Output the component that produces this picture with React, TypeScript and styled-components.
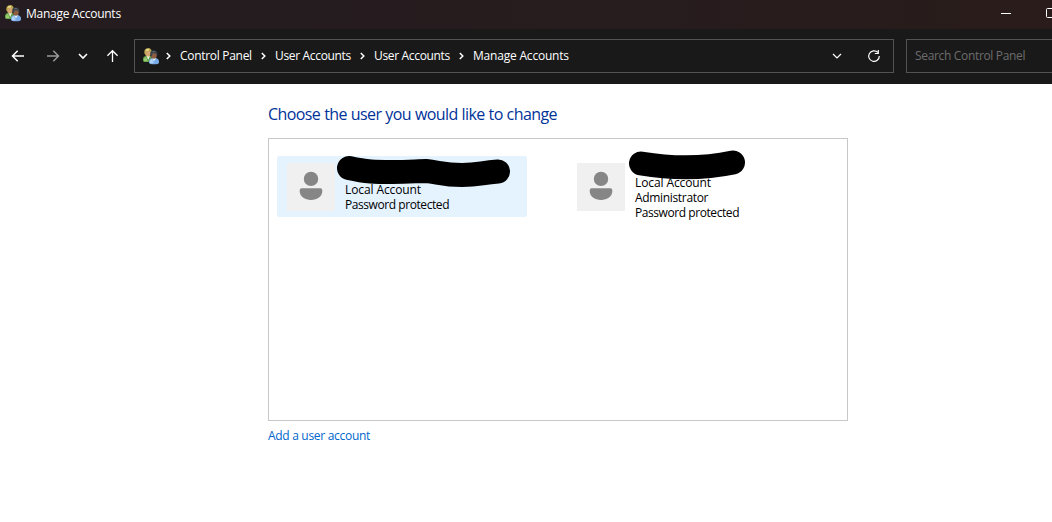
import React from "react";
import styled, { createGlobalStyle } from "styled-components";

const GlobalStyle = createGlobalStyle`
  * { box-sizing: border-box; }
  html, body { margin: 0; background: #fff; overflow: hidden; }
  body { font: 12px/15px "Segoe UI", "Open Sans", "Noto Sans", sans-serif; color: #000; }
`;

const Window = styled.div`
  width: 1052px;
  height: 522px;
  overflow: hidden;
  background: #fff;
`;

const TitleBar = styled.header`
  display: flex;
  align-items: center;
  height: 29px;
  padding: 0 0 2px 5px;
  background: linear-gradient(90deg, #241c20, #271c1e 60%, #291c1a);
  color: #fff;
`;

const Title = styled.span`
  margin-left: 5px;
  white-space: nowrap;
  letter-spacing: -0.27px;
`;

const WindowButtons = styled.div`
  display: flex;
  align-items: center;
  flex: none;
  gap: 34px;
  height: 28px;
  margin-left: auto;
  padding-top: 1px;
`;

const Toolbar = styled.nav`
  display: flex;
  align-items: center;
  height: 55px;
  padding-bottom: 1px;
  background: #191919;
  color: #fff;
`;

const NavButtons = styled.div`
  display: flex;
  align-items: center;
  flex: none;
  width: 134px;
  padding-left: 10px;
`;

const NavButton = styled.span<{ $width: number; $color?: string }>`
  display: flex;
  flex: none;
  width: ${(p) => p.$width}px;
  color: ${(p) => p.$color ?? "#fff"};
`;

const AddressBar = styled.div`
  display: flex;
  align-items: center;
  flex: none;
  width: 760px;
  height: 34px;
  padding: 0 12px 0 8px;
  border: 1px solid #535353;
`;

const Crumb = styled.span<{ $width: number; $spacing: number }>`
  flex: none;
  width: ${(p) => p.$width}px;
  padding-bottom: 1px;
  white-space: nowrap;
  letter-spacing: ${(p) => p.$spacing}px;
`;

const Separator = styled.span<{ $first: boolean }>`
  display: flex;
  flex: none;
  width: ${(p) => (p.$first ? 21 : 23)}px;
  padding-left: ${(p) => (p.$first ? 7 : 9)}px;
`;

const AddressActions = styled.div`
  display: flex;
  align-items: center;
  gap: 25px;
  margin-left: auto;
`;

const SearchBox = styled.div`
  flex: none;
  width: 160px;
  height: 34px;
  margin-left: 12px;
  padding: 8px;
  border: 1px solid #535353;
  color: #6d6d6d;
  white-space: nowrap;
  letter-spacing: -0.33px;
`;

const Content = styled.main`
  width: 580px;
  margin-left: 268px;
  padding-top: 20px;
`;

const Heading = styled.h1`
  margin: 0 0 13px;
  font-size: 16px;
  font-weight: 400;
  line-height: 21px;
  letter-spacing: -0.58px;
  word-spacing: 0.3px;
  color: #003399;
  white-space: nowrap;
`;

const AccountList = styled.section`
  display: flex;
  align-items: flex-start;
  gap: 40px;
  height: 283px;
  padding: 17px 8px;
  border: 1px solid #c8c8c8;
`;

const Account = styled.article<{ $selected?: boolean }>`
  display: flex;
  align-items: center;
  gap: 10px;
  width: 250px;
  min-height: 61px;
  padding-left: 10px;
  border-radius: 2px;
  background: ${(p) => (p.$selected ? "#e5f3ff" : "transparent")};
`;

const Avatar = styled.div`
  flex: none;
  width: 48px;
  height: 48px;
  background: #f0f0f0;
`;

const Details = styled.div`
  position: relative;
  padding-top: 3px;
  margin-bottom: -3px;
`;

const Name = styled.div`
  height: 15px;
`;

const Detail = styled.div<{ $spacing: number }>`
  white-space: nowrap;
  letter-spacing: ${(p) => p.$spacing}px;
`;

const Redaction = styled.svg<{ $left: number; $top: number }>`
  position: absolute;
  left: ${(p) => p.$left}px;
  top: ${(p) => p.$top}px;
`;

const AddLink = styled.a`
  display: block;
  margin-top: 7px;
  color: #0066cc;
  letter-spacing: -0.3px;
`;

const UsersIcon = () => (
  <svg width="16" height="17" viewBox="0 0 16 17">
    <path d="M0 12.500V10.500Q.3 8.300 2.600 7.900L7 7.500l2 2.500v4H1.500Q0 13.700 0 12.500Z" fill="#5f9f48" />
    <path d="M.8 11.500q.4-2.200 2.400-2.600l1.300 4.400H1.200Z" fill="#9acb72" />
    <path d="m3.400 7.800 1.800 4.200L7 7.800Z" fill="#eef1df" />
    <ellipse cx="4.900" cy="4.700" rx="3" ry="3.700" fill="#d3a56f" />
    <path d="M1.400 5.500Q.7 1.700 3.300.5 6.200-.6 7.900 1.300q1.200 1.500.5 4.200L7 3.300 3.500 3l-.9 3.500Z" fill="#b9a54c" />
    <path d="M2.300 2.400Q3.700.5 6.200 1.200L5.500 2.800Z" fill="#efe2a0" />
    <path d="M6 14.700v-1.700q.4-2.200 2.800-2.800l4.300-.2q2.700.8 2.900 3v1.700Q15.500 16.200 11 16.200q-4.500 0-5-1.500Z" fill="#78abe8" />
    <path d="M6.900 13q.5-1.700 2.200-1.900l1.700 4.100H6.800Z" fill="#b2d4fa" />
    <path d="m9.100 10 1.900 3.300 1.900-3.300Z" fill="#eef6ff" />
    <ellipse cx="10.900" cy="7.100" rx="3" ry="3.600" fill="#8b5d43" />
    <path d="M7.500 7.200Q6.700 3.600 9 2.700q2.900-.9 4.600.7 1.300 1.400.6 4.100l-1.500-2.100-3.100-.1-.8 2.700Z" fill="#39424a" />
    <path d="M9 3.700q1.500-1 3-.4l-.7 1Z" fill="#65717b" />
  </svg>
);

const stroke = { fill: "none", stroke: "currentColor" } as const;

const ArrowLeft = () => (
  <svg width="16" height="16" viewBox="0 0 16 16">
    <path d="M14 8H2.500M7.700 2.800 2.500 8l5.200 5.200" {...stroke} strokeWidth="1.500" />
  </svg>
);

const ArrowRight = () => (
  <svg width="16" height="16" viewBox="0 0 16 16">
    <path d="M1 8h11.500M7.300 2.800 12.500 8l-5.200 5.200" {...stroke} strokeWidth="1.500" />
  </svg>
);

const ArrowUp = () => (
  <svg width="14" height="16" viewBox="0 0 14 16">
    <path d="M6.500 14V2.700M1.400 7.800l5.100-5.100 5.100 5.100" {...stroke} strokeWidth="1.300" />
  </svg>
);

const ChevronDown = ({ weight = 1.2 }: { weight?: number }) => (
  <svg width="10" height="10" viewBox="0 0 10 10">
    <path d="m1 3 4 4 4-4" {...stroke} strokeWidth={weight} />
  </svg>
);

const Crumbs = [
  { text: "Control Panel", width: 72, spacing: -0.3 },
  { text: "User Accounts", width: 76, spacing: -0.33 },
  { text: "User Accounts", width: 76, spacing: -0.33 },
  { text: "Manage Accounts", width: 97, spacing: -0.2 },
];

const Portrait = () => (
  <Avatar>
    <svg width="48" height="48" viewBox="0 0 48 48">
      <circle cx="24" cy="15.900" r="7.200" fill="#868686" />
      <path d="M14.700 25.200h18.600a2 2 0 0 1 2 2v.8c0 5.500-5 9-11.300 9s-11.300-3.500-11.300-9v-.8a2 2 0 0 1 2-2Z" fill="#868686" />
    </svg>
  </Avatar>
);

export default function App() {
  return (
    <Window>
      <GlobalStyle />
      <TitleBar>
        <UsersIcon />
        <Title>Manage Accounts</Title>
        <WindowButtons>
          <svg width="12" height="12" viewBox="0 0 12 12">
            <path d="M1 5.500h10" stroke="#fff" />
          </svg>
          <svg width="6" height="12" viewBox="0 0 6 12">
            <rect x=".5" y=".5" width="9" height="9" rx="1" fill="none" stroke="#fff" />
          </svg>
        </WindowButtons>
      </TitleBar>
      <Toolbar>
        <NavButtons>
          <NavButton $width={36}><ArrowLeft /></NavButton>
          <NavButton $width={32} $color="#999"><ArrowRight /></NavButton>
          <NavButton $width={28}><ChevronDown weight={1.6} /></NavButton>
          <NavButton $width={14}><ArrowUp /></NavButton>
        </NavButtons>
        <AddressBar>
          <UsersIcon />
          {Crumbs.map((crumb, i) => (
            <React.Fragment key={i}>
              <Separator $first={i === 0}>
                <svg width="5" height="8" viewBox="0 0 5 8">
                  <path d="m.8 1 3 3-3 3" {...stroke} strokeWidth="1.500" />
                </svg>
              </Separator>
              <Crumb $width={crumb.width} $spacing={crumb.spacing}>{crumb.text}</Crumb>
            </React.Fragment>
          ))}
          <AddressActions>
            <ChevronDown />
            <svg width="14" height="14" viewBox="0 0 14 14">
              <path d="M10.800 3.400A5.300 5.300 0 1 0 12.300 7M11.300 1v3.500H7.800" {...stroke} strokeWidth="1.200" />
            </svg>
          </AddressActions>
        </AddressBar>
        <SearchBox>Search Control Panel</SearchBox>
      </Toolbar>
      <Content>
        <Heading>Choose the user you would like to change</Heading>
        <AccountList>
          <Account $selected>
            <Portrait />
            <Details>
              <Name />
              <Detail $spacing={-0.1}>Local Account</Detail>
              <Detail $spacing={-0.43}>Password protected</Detail>
              <Redaction $left={-8} $top={-9} width="174" height="34" viewBox="0 0 174 34">
                <path d="M12 13C30 17 38 17 55 17c17 0 26-1 34-1 12 1 17 4 36 4 17 0 18-2 36-3.500" fill="none" stroke="#000" strokeWidth="24" strokeLinecap="round" />
              </Redaction>
            </Details>
          </Account>
          <Account>
            <Portrait />
            <Details>
              <Name />
              <Detail $spacing={-0.1}>Local Account</Detail>
              <Detail $spacing={-0.33}>Administrator</Detail>
              <Detail $spacing={-0.43}>Password protected</Detail>
              <Redaction $left={-6} $top={-7} width="118" height="32" viewBox="0 0 118 32">
                <path d="M12 13.500q49 8 92-1" fill="none" stroke="#000" strokeWidth="24" strokeLinecap="round" />
              </Redaction>
            </Details>
          </Account>
        </AccountList>
        <AddLink>Add a user account</AddLink>
      </Content>
    </Window>
  );
}
